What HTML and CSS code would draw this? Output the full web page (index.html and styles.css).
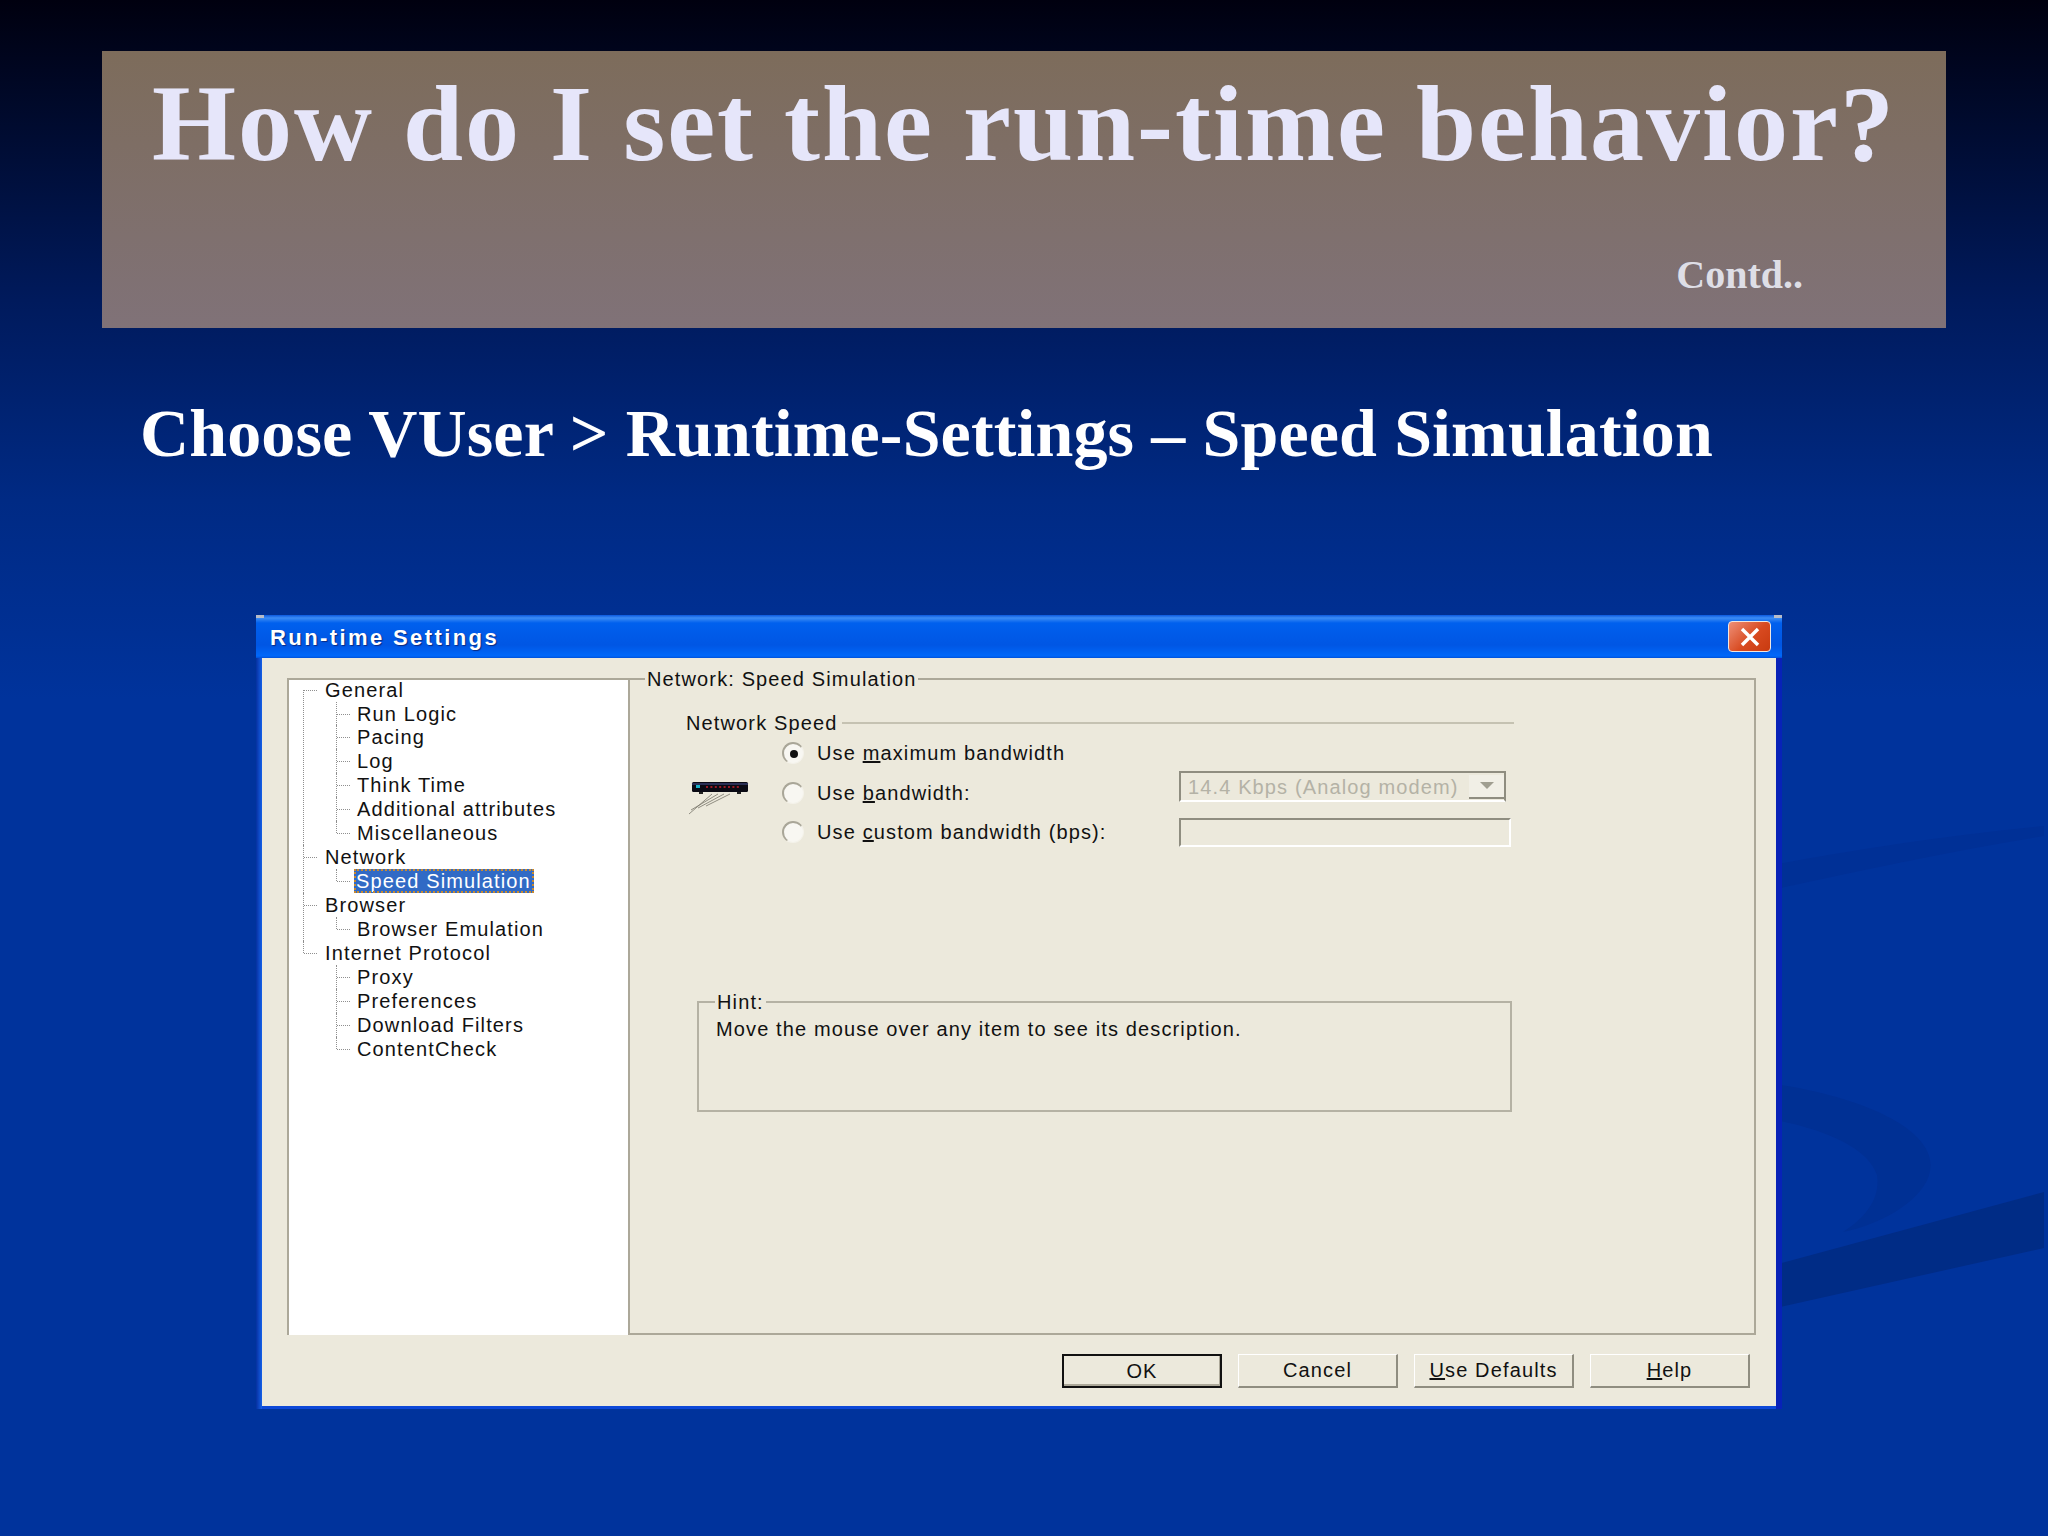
FILE: index.html
```html
<!DOCTYPE html>
<html lang="en">
<head>
  <meta charset="UTF-8" />
  <title>How do I set the run-time behavior?</title>
  <link rel="stylesheet" href="styles.css">
</head>
<body>
  <div class="slide">
    <svg class="swoosh" width="2048" height="1536" viewBox="0 0 2048 1536">
      <path class="swoosh-faint" d="M1700 880 C1800 858 1920 838 2044 826 L2044 836 C1920 856 1820 880 1700 905 Z" />
      <path class="swoosh-curve" d="M1700 1078 C1820 1080 1940 1120 1930 1171 C1925 1200 1880 1225 1843 1232 C1870 1215 1880 1195 1877 1175 C1865 1140 1800 1118 1700 1110 Z" />
      <path class="swoosh-bar" d="M1700 1285 L2044 1192 L2044 1248 L1700 1325 Z" />
    </svg>

    <div class="banner">
      <h1>How do I set the run-time behavior?</h1>
      <p class="contd">Contd..</p>
    </div>

    <h2 class="subtitle">Choose VUser &gt; Runtime-Settings – Speed Simulation</h2>

    <div class="dialog">
      <div class="titlebar">
        <span class="titlebar-text">Run-time Settings</span>
        <span class="close-btn">
          <svg width="24" height="20" viewBox="0 0 24 20"><path d="M4 2 L20 18 M20 2 L4 18" stroke="#fff" stroke-width="3.4" /></svg>
        </span>
      </div>

      <div class="client">
        <div class="main-row">
          <div class="tree">
            <ul class="tree-root">
              <li><span class="node">General</span>
                <ul>
                  <li><span class="node">Run Logic</span></li>
                  <li><span class="node">Pacing</span></li>
                  <li><span class="node">Log</span></li>
                  <li><span class="node">Think Time</span></li>
                  <li><span class="node">Additional attributes</span></li>
                  <li><span class="node">Miscellaneous</span></li>
                </ul>
              </li>
              <li><span class="node">Network</span>
                <ul>
                  <li><span class="node selected">Speed Simulation</span></li>
                </ul>
              </li>
              <li><span class="node">Browser</span>
                <ul>
                  <li><span class="node">Browser Emulation</span></li>
                </ul>
              </li>
              <li><span class="node">Internet Protocol</span>
                <ul>
                  <li><span class="node">Proxy</span></li>
                  <li><span class="node">Preferences</span></li>
                  <li><span class="node">Download Filters</span></li>
                  <li><span class="node">ContentCheck</span></li>
                </ul>
              </li>
            </ul>
          </div>

          <fieldset class="group">
            <legend>Network: Speed Simulation</legend>

            <div class="speed-title">
              <span>Network Speed</span>
              <span class="speed-rule"></span>
            </div>

            <div class="speed-body">
              <svg class="router" width="64" height="36" viewBox="0 0 64 36">
                <rect x="4" y="0" width="56" height="10" rx="1.5" fill="#0a0a14" />
                <rect x="4" y="1" width="56" height="2" fill="#2a2f55" />
                <rect x="8" y="3" width="4" height="3" fill="#19b0c8" />
                <path d="M18 5 H52" stroke="#c8202a" stroke-width="1.6" stroke-dasharray="2 2.4" />
                <rect x="11" y="10" width="4" height="2" fill="#222" />
                <rect x="49" y="10" width="4" height="2" fill="#222" />
                <path d="M24 12 L1 32 M30 12 L3 28 M36 12 L10 26 M42 12 L18 24" stroke="#77756a" stroke-width="0.8" fill="none" />
              </svg>

              <div class="radio-list">
                <div class="radio-row">
                  <span class="radio checked"></span>
                  <span class="radio-label">Use <u>m</u>aximum bandwidth</span>
                </div>
                <div class="radio-row">
                  <span class="radio"></span>
                  <span class="radio-label">Use <u>b</u>andwidth:</span>
                  <div class="combo">
                    <span class="combo-text">14.4 Kbps (Analog modem)</span>
                    <span class="combo-arrow"></span>
                  </div>
                </div>
                <div class="radio-row">
                  <span class="radio"></span>
                  <span class="radio-label">Use <u>c</u>ustom bandwidth (bps):</span>
                  <div class="text-input"></div>
                </div>
              </div>
            </div>

            <fieldset class="hint">
              <legend>Hint:</legend>
              <p>Move the mouse over any item to see its description.</p>
            </fieldset>
          </fieldset>
        </div>

        <div class="buttons">
          <span class="btn btn-default">OK</span>
          <span class="btn">Cancel</span>
          <span class="btn btn-wide"><u>U</u>se Defaults</span>
          <span class="btn"><u>H</u>elp</span>
        </div>
      </div>
    </div>
  </div>
</body>
</html>
```

FILE: styles.css
```css
* { box-sizing: border-box; }
html, body { margin: 0; padding: 0; }
body { background: #00339c; }

.slide {
  position: relative;
  width: 2048px;
  height: 1536px;
  overflow: hidden;
  padding-top: 51px;
  background: linear-gradient(to bottom, #00000f 0, #001a5c 300px, #002a84 500px, #00339c 700px);
}
.swoosh { position: absolute; left: 0; top: 0; }
.swoosh-faint { fill: #003096; }
.swoosh-curve { fill: #003094; }
.swoosh-bar { fill: #002c86; }

.banner {
  position: relative;
  width: 1844px;
  height: 277px;
  margin-left: 102px;
  background: linear-gradient(to bottom, #7d6c5b, #807278);
}
.banner h1 {
  margin: 0;
  padding-top: 11px;
  text-align: center;
  font: bold 108px/1.15 "Liberation Serif", serif;
  color: #e6e6fa;
  letter-spacing: 2px;
}
.contd {
  margin: 65px 0 0;
  padding-right: 143px;
  text-align: right;
  font: bold 40px/1.2 "Liberation Serif", serif;
  color: #dedee6;
}
.subtitle {
  position: relative;
  margin: 65px 0 0 140px;
  font: bold 68px/1.2 "Liberation Serif", serif;
  letter-spacing: 0.13px;
  color: #fff;
}

.dialog {
  position: relative;
  width: 1526px;
  height: 794px;
  margin: 140px 0 0 256px;
  display: flex;
  flex-direction: column;
  background: linear-gradient(to right, #06309f, #1560e8 6px, #0822b8 6px);
  padding: 0 6px;
  font: 20px/24px "Liberation Sans", sans-serif;
  letter-spacing: 1.13px;
  color: #111;
}
.dialog::before,
.dialog::after {
  content: "";
  position: absolute;
  top: 0;
  width: 8px;
  height: 3px;
  background: #b8bcc8;
  z-index: 1;
}
.dialog::before { left: 0; }
.dialog::after { right: 0; }
.titlebar {
  height: 43px;
  margin: 0 -6px;
  padding: 1px 11px 0 14px;
  display: flex;
  align-items: center;
  justify-content: space-between;
  background: linear-gradient(to bottom, #0a58e0 0, #3c8cf4 3px, #0060ee 8px, #0056e4 30px, #0068fa 41px, #0050d8 43px);
}
.titlebar-text {
  padding-top: 3px;
  font-weight: bold;
  font-size: 22px;
  letter-spacing: 2.4px;
  color: #fff;
  text-shadow: 1px 1px 1px #0a2a80;
}
.close-btn {
  width: 43px;
  height: 31px;
  display: flex;
  align-items: center;
  justify-content: center;
  border: 1px solid #f0e6e0;
  border-radius: 4px;
  background: linear-gradient(135deg, #ee9078, #d84a20 55%, #c83a10);
}
.client {
  flex: 1;
  display: flex;
  flex-direction: column;
  background: #ece9dc;
  padding: 20px 20px 16px 25px;
  border-bottom: 3px solid #0c48d8;
}
.main-row { display: flex; height: 657px; }

.tree {
  width: 341px;
  flex: none;
  background: #fff;
  border-top: 2px solid #aca899;
  border-left: 2px solid #aca899;
}
.tree ul { list-style: none; margin: 0; padding: 0; }
.tree-root { margin: -2px 0 0 14px !important; }
.tree li {
  position: relative;
  padding-left: 22px;
}
.tree li::before {
  content: "";
  position: absolute;
  left: 0;
  top: 0;
  bottom: 0;
  border-left: 1px dotted #8f8f8f;
}
.tree li::after {
  content: "";
  position: absolute;
  left: 1px;
  top: 12px;
  width: 13px;
  border-top: 1px dotted #8f8f8f;
}
.tree li:last-child::before { bottom: auto; height: 12px; }
.tree li ul { margin-left: 11px; }
.tree li li { padding-left: 21px; }
.tree-root > li:first-child::before { top: 12px; bottom: 0; }
.node {
  display: block;
  height: 23.93px;
  white-space: nowrap;
}
.node.selected {
  display: inline-block;
  margin-left: -3px;
  padding: 0 3px 0 2px;
  background: #316ac5;
  color: #fff;
  outline: 2px dotted #c88a30;
  outline-offset: -2px;
}

.group {
  flex: 1;
  min-width: 0;
  margin: -11px 0 0;
  padding: 20px 0 0;
  border: 2px solid #aca899;
  height: 668px;
}
.group > legend {
  margin-left: 15px;
  padding: 0 2px;
}
.speed-title {
  width: 828px;
  margin-left: 56px;
  display: flex;
  align-items: center;
  gap: 5px;
}
.speed-rule {
  flex: 1;
  border-top: 2px solid #c5c2b2;
}
.speed-body {
  position: relative;
  width: 828px;
  margin-left: 56px;
  padding-left: 96px;
}
.router {
  position: absolute;
  left: 2px;
  top: 48px;
}
.radio-list { margin-top: -1px; }
.radio-row {
  height: 39.5px;
  display: flex;
  align-items: center;
}
.radio {
  width: 22px;
  height: 22px;
  flex: none;
  margin-right: 13px;
  border-radius: 50%;
  background: #f8f7f2;
  border-top: 2px solid #a9a698;
  border-left: 2px solid #a9a698;
  border-right: 1px solid #f4f2ea;
  border-bottom: 1px solid #f4f2ea;
  display: flex;
  align-items: center;
  justify-content: center;
}
.radio.checked::after {
  content: "";
  width: 8px;
  height: 8px;
  border-radius: 50%;
  background: #111;
}
.radio-label { width: 362px; flex: none; white-space: nowrap; }
.combo {
  width: 327px;
  height: 31px;
  margin-bottom: 12px;
  display: flex;
  align-items: center;
  justify-content: space-between;
  padding: 0 0 0 7px;
  border-top: 2px solid #8f8d80;
  border-left: 2px solid #8f8d80;
  border-right: 2px solid #8f8d80;
  border-bottom: 2px solid #fff;
  color: #b4b2a6;
  white-space: nowrap;
}
.combo-arrow {
  width: 35px;
  height: 24px;
  flex: none;
  background: #f1efe6;
  border-bottom: 2px solid #8f8d80;
  display: flex;
  align-items: center;
  justify-content: center;
}
.combo-arrow::after {
  content: "";
  border-left: 7px solid transparent;
  border-right: 7px solid transparent;
  border-top: 7px solid #a09e90;
}
.text-input {
  width: 332px;
  height: 29px;
  border-top: 2px solid #8f8d80;
  border-left: 2px solid #8f8d80;
  border-right: 2px solid #fff;
  border-bottom: 2px solid #fff;
}
.hint {
  width: 815px;
  height: 122px;
  margin: 138px 0 0 67px;
  padding: 0 0 0 17px;
  border: 2px solid #b5b2a4;
  min-width: 0;
}
.hint > legend { margin-left: -1px; padding: 0 2px; }
.hint p { margin: 3px 0 0; white-space: nowrap; }

.buttons {
  display: flex;
  justify-content: flex-end;
  gap: 16px;
  padding: 19px 6px 0 0;
}
.btn {
  width: 160px;
  height: 34px;
  display: flex;
  align-items: center;
  justify-content: center;
  border-top: 1px solid #fff;
  border-left: 1px solid #fff;
  border-right: 2px solid #8f8d80;
  border-bottom: 2px solid #8f8d80;
  background: #ece9dc;
  white-space: pre;
}
.btn-default { border: 2px solid #111; box-shadow: inset -1px -2px 0 #aca899; }
```
